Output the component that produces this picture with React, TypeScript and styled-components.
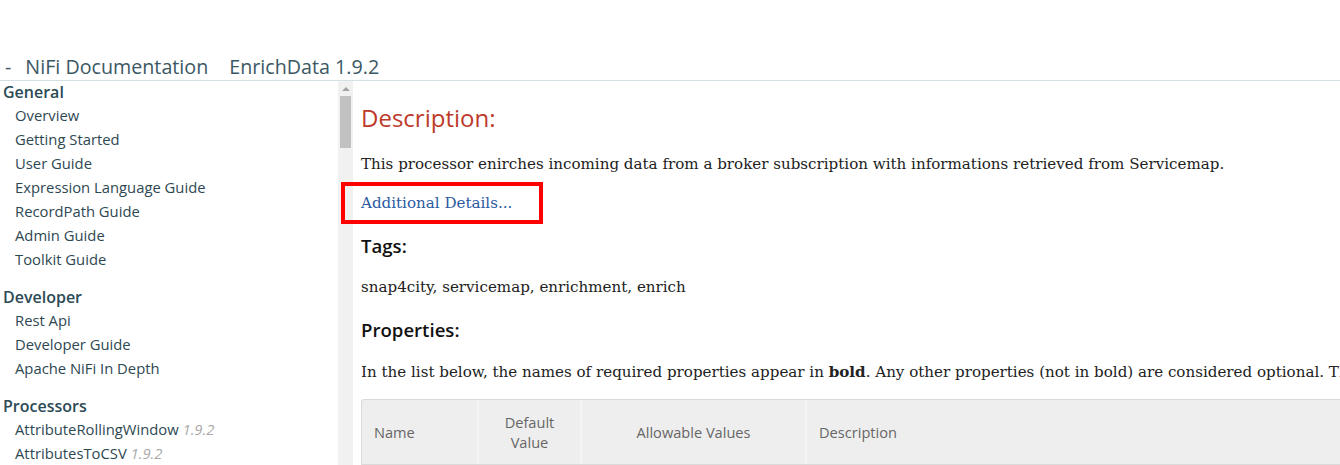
import React from "react";
import styled, { createGlobalStyle } from "styled-components";

const Global = createGlobalStyle`
  html, body { margin: 0; padding: 0; background: #fff; }
  body { font-family: "Open Sans", "Noto Sans", sans-serif; overflow: hidden; }
  * { box-sizing: border-box; }
`;

const Page = styled.div`
  width: 1340px;
  height: 465px;
  display: flex;
  flex-direction: column;
  overflow: hidden;
`;

const Header = styled.header`
  height: 81px;
  flex: none;
  display: flex;
  align-items: flex-end;
  padding: 0 0 0 5px;
  border-bottom: 1px solid #d5e0e5;
  font-size: 19.7px;
  line-height: 26px;
  color: #3b5864;
  white-space: nowrap;
`;

const HeaderPart = styled.span<{ $gap: number }>`
  margin-right: ${(p) => p.$gap}px;
`;

const Body = styled.div`
  flex: 1;
  display: flex;
  min-height: 0;
`;

const Sidebar = styled.nav`
  width: 338px;
  flex: none;
  padding: 0 0 0 3px;
  color: #2e4852;
`;

const Section = styled.div`
  margin-bottom: 15px;
`;

const SectionTitle = styled.div`
  font-size: 16px;
  font-weight: 600;
  line-height: 22px;
  color: #2b4a55;
`;

const NavItem = styled.div`
  font-size: 14.8px;
  line-height: 24px;
  padding-left: 12px;
  white-space: nowrap;
`;

const Version = styled.span`
  color: #aaa;
  font-style: italic;
`;

const Scrollbar = styled.div`
  width: 15px;
  flex: none;
  background: #f1f1f1;
  display: flex;
  flex-direction: column;
  align-items: center;
`;

const ScrollArrow = styled.div`
  height: 15px;
  width: 15px;
  display: flex;
  align-items: center;
  justify-content: center;
  &::before {
    content: "";
    border-left: 4px solid transparent;
    border-right: 4px solid transparent;
    border-bottom: 4px solid #a3a3a3;
  }
`;

const ScrollThumb = styled.div`
  width: 11px;
  height: 52px;
  background: #c1c1c1;
`;

const Content = styled.main`
  flex: 1;
  padding: 21px 0 0 8px;
  min-width: 0;
  font-family: "DejaVu Serif", serif;
  font-size: 15.1px;
  color: #222;
  white-space: nowrap;
`;

const Title = styled.h2`
  margin: 0 0 19px;
  font-family: "Open Sans", sans-serif;
  font-weight: 400;
  font-size: 24px;
  line-height: 32px;
  color: #bd3a2b;
`;

const Para = styled.p<{ $mb: number }>`
  margin: 0 0 ${(p) => p.$mb}px;
  line-height: 22px;
`;

const LinkWrap = styled.div`
  position: relative;
  margin: 0 0 20px;
  line-height: 22px;
`;

const Link = styled.a`
  color: #2c5aa0;
  text-decoration: none;
`;

const Highlight = styled.div`
  position: absolute;
  left: -20px;
  top: -10px;
  width: 202px;
  height: 42px;
  border: 4px solid #ff0000;
  pointer-events: none;
`;

const SubTitle = styled.h3<{ $mb: number }>`
  margin: 0 0 ${(p) => p.$mb}px;
  font-family: "Open Sans", sans-serif;
  font-weight: 600;
  font-size: 18.6px;
  line-height: 24px;
  color: #111;
`;

const Table = styled.div`
  display: grid;
  grid-template-columns: 115px 103px 225px 1fr;
  border: 1px solid #dadada;
  border-right: none;
  border-radius: 3px 0 0 0;
  background: #eeeeee;
  height: 66px;
  font-family: "Open Sans", sans-serif;
  font-size: 14.6px;
  color: #666;
`;

const Th = styled.div<{ $align?: string }>`
  display: flex;
  align-items: center;
  justify-content: ${(p) => (p.$align === "center" ? "center" : "flex-start")};
  text-align: ${(p) => p.$align || "left"};
  padding: 0 12px;
  line-height: 20px;
  white-space: normal;
  border-left: 2px solid #f4f4f4;
  &:first-child { border-left: none; }
`;

const generalItems = [
  "Overview",
  "Getting Started",
  "User Guide",
  "Expression Language Guide",
  "RecordPath Guide",
  "Admin Guide",
  "Toolkit Guide",
];
const developerItems = ["Rest Api", "Developer Guide", "Apache NiFi In Depth"];
const processorItems = ["AttributeRollingWindow", "AttributesToCSV"];

export default function App() {
  return (
    <Page>
      <Global />
      <Header>
        <HeaderPart $gap={14}>-</HeaderPart>
        <HeaderPart $gap={21}>NiFi Documentation</HeaderPart>
        <HeaderPart $gap={0}>EnrichData 1.9.2</HeaderPart>
      </Header>
      <Body>
        <Sidebar>
          <Section>
            <SectionTitle>General</SectionTitle>
            {generalItems.map((i) => (
              <NavItem key={i}>{i}</NavItem>
            ))}
          </Section>
          <Section>
            <SectionTitle>Developer</SectionTitle>
            {developerItems.map((i) => (
              <NavItem key={i}>{i}</NavItem>
            ))}
          </Section>
          <Section>
            <SectionTitle>Processors</SectionTitle>
            {processorItems.map((i) => (
              <NavItem key={i}>
                {i} <Version>1.9.2</Version>
              </NavItem>
            ))}
          </Section>
        </Sidebar>
        <Scrollbar>
          <ScrollArrow />
          <ScrollThumb />
        </Scrollbar>
        <Content>
          <Title>Description:</Title>
          <Para $mb={17}>
            This processor enirches incoming data from a broker subscription with informations retrieved from Servicemap.
          </Para>
          <LinkWrap>
            <Link href="#">Additional Details...</Link>
            <Highlight />
          </LinkWrap>
          <SubTitle $mb={18}>Tags:</SubTitle>
          <Para $mb={20}>snap4city, servicemap, enrichment, enrich</Para>
          <SubTitle $mb={19}>Properties:</SubTitle>
          <Para $mb={16}>
            In the list below, the names of required properties appear in <b>bold</b>. Any other properties (not in bold) are considered optional. The table also indicates any default values.
          </Para>
          <Table>
            <Th>Name</Th>
            <Th $align="center">Default Value</Th>
            <Th $align="center">Allowable Values</Th>
            <Th>Description</Th>
          </Table>
        </Content>
      </Body>
    </Page>
  );
}
